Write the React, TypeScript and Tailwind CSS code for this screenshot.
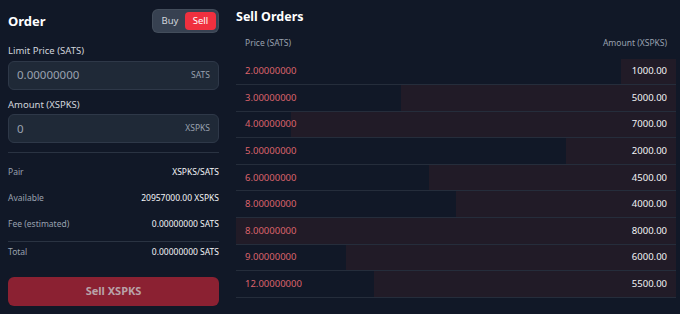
import React from 'react';

const orders = [
  { price: '2.00000000', amount: 1000 },
  { price: '3.00000000', amount: 5000 },
  { price: '4.00000000', amount: 7000 },
  { price: '5.00000000', amount: 2000 },
  { price: '6.00000000', amount: 4500 },
  { price: '8.00000000', amount: 4000 },
  { price: '8.00000000', amount: 8000 },
  { price: '9.00000000', amount: 6000 },
  { price: '12.00000000', amount: 5500 },
];

const maxAmount = Math.max(...orders.map((o) => o.amount));

const App: React.FC = () => {
  return (
    <div
      className="w-[680px] h-[314px] bg-[#111827] text-white flex gap-[17px] px-2 overflow-hidden"
      style={{ fontFamily: '"Noto Sans", "Open Sans", sans-serif' }}
    >
      {/* Order form */}
      <div className="w-[211px] shrink-0 flex flex-col">
        <div className="flex items-center justify-between pt-[9px] h-[33px]">
          <h2 className="text-[13px] font-bold leading-none">Order</h2>
          <div className="flex items-center h-[24px] p-[2px] rounded-md bg-[#374151] border border-[#4b5563]/60">
            <button className="h-full w-[30px] text-[9.5px] text-gray-300 rounded">Buy</button>
            <button className="h-full w-[31px] text-[9.5px] text-white bg-[#f0303f] rounded">Sell</button>
          </div>
        </div>

        <label className="text-[9.5px] text-gray-300 mt-[13px] leading-none">Limit Price (SATS)</label>
        <div className="mt-[5px] h-[29px] flex items-center justify-between px-[8px] rounded-md bg-[#1f2937] border border-[#2e3848]">
          <span className="text-[11.5px] text-gray-400">0.00000000</span>
          <span className="text-[8.5px] text-gray-400">SATS</span>
        </div>

        <label className="text-[9.5px] text-gray-300 mt-[10px] leading-none">Amount (XSPKS)</label>
        <div className="mt-[5px] h-[29px] flex items-center justify-between px-[8px] rounded-md bg-[#1f2937] border border-[#2e3848]">
          <span className="text-[11.5px] text-gray-400">0</span>
          <span className="text-[8.5px] text-gray-400">XSPKS</span>
        </div>

        <div className="mt-[9px] border-t border-[#2a3342]" />

        <div className="flex flex-col text-[8.5px]">
          <div className="flex justify-between items-center h-[26px] mt-[6px]">
            <span className="text-gray-400">Pair</span>
            <span className="text-gray-100">XSPKS/SATS</span>
          </div>
          <div className="flex justify-between items-center h-[26px]">
            <span className="text-gray-400">Available</span>
            <span className="text-gray-100">20957000.00 XSPKS</span>
          </div>
          <div className="flex justify-between items-center h-[26px]">
            <span className="text-gray-400">Fee (estimated)</span>
            <span className="text-gray-100">0.00000000 SATS</span>
          </div>
          <div className="border-t border-[#2a3342] mt-[4px]" />
          <div className="flex justify-between items-center h-[20px]">
            <span className="text-gray-400">Total</span>
            <span className="text-gray-100">0.00000000 SATS</span>
          </div>
        </div>

        <button className="mt-[15px] h-[29px] rounded-md bg-[#8b2132] text-[11px] font-bold text-[#b9a2a8]">
          Sell XSPKS
        </button>
      </div>

      {/* Order book */}
      <div className="w-[440px] shrink-0 flex flex-col">
        <h2 className="text-[12.5px] font-bold leading-none pt-[11px]">Sell Orders</h2>
        <div className="flex justify-between items-center px-[9px] h-[22px] mt-[9px] mb-[4px] text-[8.5px] text-gray-400">
          <span>Price (SATS)</span>
          <span>Amount (XSPKS)</span>
        </div>
        <div className="flex flex-col">
          {orders.map((o, i) => (
            <div
              key={i}
              className="relative h-[26.6px] flex items-center justify-between px-[9px] border-b border-[#252d3b]"
            >
              <div
                className="absolute right-0 top-0 bottom-0 bg-[#211b27]"
                style={{ width: `${(o.amount / maxAmount) * 100}%` }}
              />
              <span className="relative text-[9.5px] text-[#dc636b]">{o.price}</span>
              <span className="relative text-[9.5px] text-gray-100">{o.amount.toFixed(2)}</span>
            </div>
          ))}
        </div>
      </div>
    </div>
  );
};

export default App;
